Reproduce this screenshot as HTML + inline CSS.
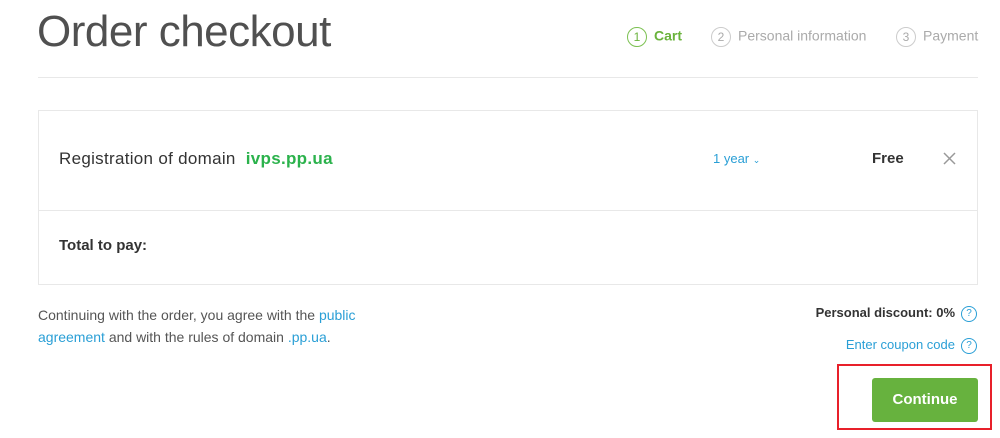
<!DOCTYPE html>
<html><head><meta charset="utf-8"><style>
body{margin:0;width:1000px;height:438px;background:#fff;font-family:"Liberation Sans",sans-serif;color:#333;position:relative;overflow:hidden}
.a{position:absolute;white-space:nowrap}
.circ{display:inline-block;width:18px;height:18px;border:1px solid #ccc;border-radius:50%;text-align:center;line-height:18px;font-size:12px;color:#aaa;margin-right:7px;vertical-align:middle}
.step{font-size:14px;color:#aaa}
.q{display:inline-block;width:14px;height:14px;border:1px solid #2a9fd6;border-radius:50%;color:#2a9fd6;font-size:10px;text-align:center;line-height:14px;margin-left:6px;vertical-align:middle}
</style></head><body>
<div class="a" style="left:37px;top:7px;font-size:44px;font-weight:300;color:#505050;letter-spacing:-0.5px">Order checkout</div>
<div class="a step" style="left:627px;top:27px;color:#6ab33c;font-weight:bold"><span class="circ" style="border-color:#7cc152;color:#6ab33c;font-weight:normal">1</span>Cart</div>
<div class="a step" style="left:711px;top:27px"><span class="circ">2</span>Personal information</div>
<div class="a step" style="left:896px;top:27px"><span class="circ">3</span>Payment</div>
<div class="a" style="left:38px;top:77px;width:940px;height:1px;background:#e8e8e8"></div>
<div class="a" style="left:38px;top:110px;width:938px;height:173px;border:1px solid #e8e8e8"></div>
<div class="a" style="left:39px;top:210px;width:938px;height:1px;background:#e8e8e8"></div>
<div class="a" style="left:59px;top:149px;font-size:17px;color:#333;letter-spacing:0.3px">Registration of domain &nbsp;<b style="color:#2bb24c">ivps.pp.ua</b></div>
<div class="a" style="left:713px;top:151px;font-size:13px;color:#2a9fd6">1 year <span style="font-size:9px">&#8964;</span></div>
<div class="a" style="left:872px;top:150px;font-size:15px;font-weight:bold;color:#333">Free</div>
<svg class="a" style="left:943px;top:152px" width="13" height="13"><path d="M1 1L12 12M12 1L1 12" stroke="#999" stroke-width="1.5"/></svg>
<div class="a" style="left:59px;top:237px;font-size:15px;font-weight:bold;color:#333">Total to pay:</div>
<div class="a" style="left:38px;top:304px;font-size:14px;color:#555;line-height:22px">Continuing with the order, you agree with the <span style="color:#2a9fd6">public</span><br><span style="color:#2a9fd6">agreement</span> and with the rules of domain <span style="color:#2a9fd6">.pp.ua</span>.</div>
<div class="a" style="right:23px;top:305px;font-size:13px;font-weight:bold;color:#333">Personal discount: 0%<span class="q" style="font-weight:normal">?</span></div>
<div class="a" style="right:23px;top:337px;font-size:13px;color:#2a9fd6">Enter coupon code<span class="q">?</span></div>
<div class="a" style="left:837px;top:364px;width:151px;height:62px;border:2px solid #e8202a"></div>
<div class="a" style="left:872px;top:378px;width:106px;height:44px;background:#67b23e;border-radius:3px;color:#fff;font-weight:bold;font-size:15px;text-align:center;line-height:44px">Continue</div>
</body></html>
